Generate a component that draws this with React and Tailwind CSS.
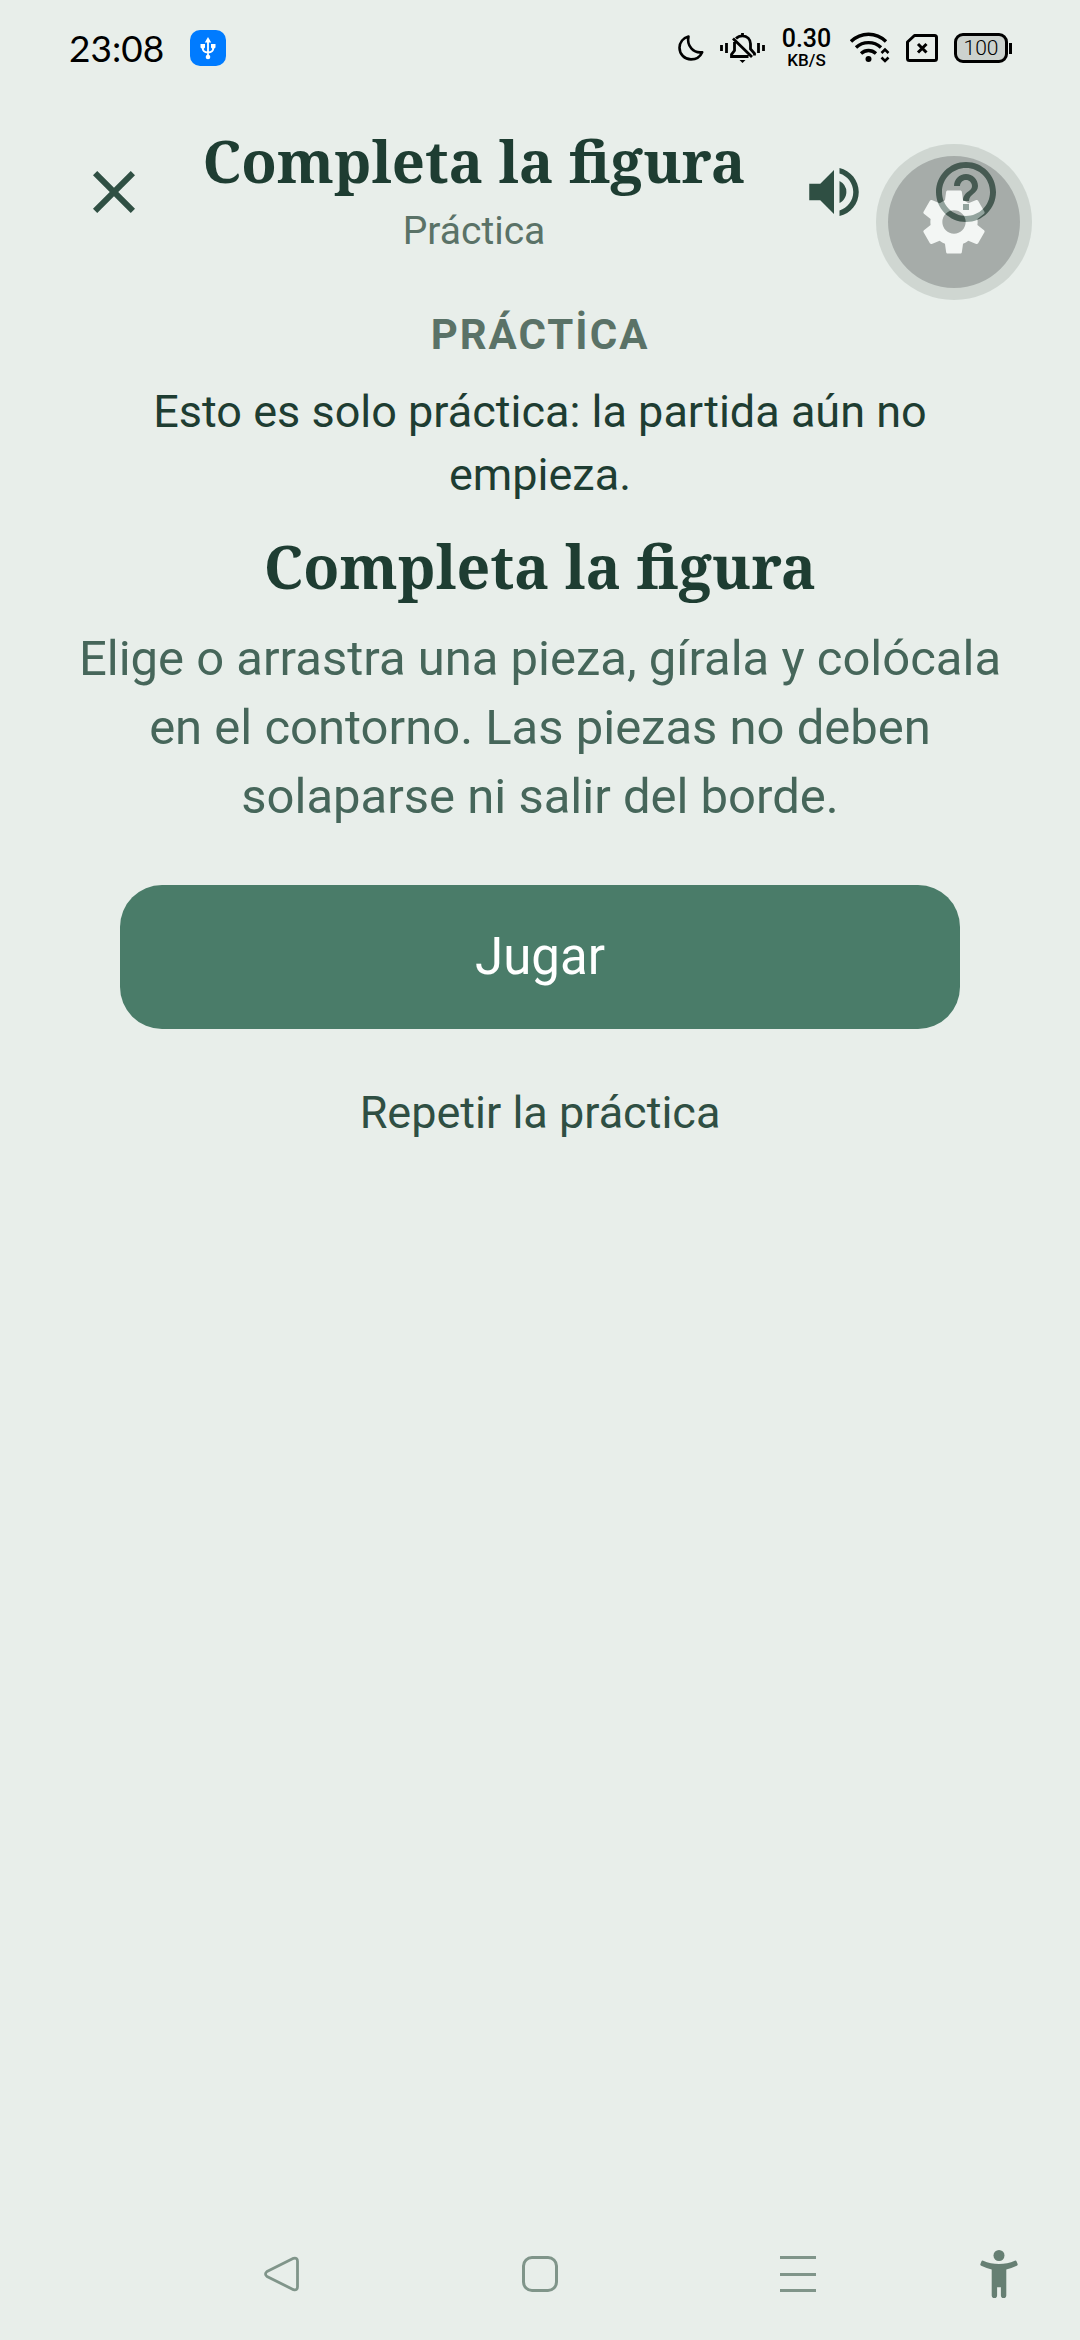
import { MdClose, MdVolumeUp, MdHelpOutline } from "react-icons/md";

function StatusBar() {
  return (
    <div className="flex h-24 items-center justify-between pl-[69px] pr-[68px] text-black">
      <div className="flex items-center gap-[26px]">
        <span className="pb-[2px] font-['Lato',sans-serif] text-[37px] leading-none">23:08</span>
        <span className="flex size-9 items-center justify-center rounded-[10px] bg-[#007bff]">
          <svg viewBox="0 0 36 36" className="size-9 fill-white">
            <path d="M18 7l3.200 5.500h-6.400z" />
            <path d="M10.500 14h4.500v3.500l-2 2-2.500-2zM21 14h4.500v3.500l-2.500 2-2-2z" />
            <path d="M18 11v15M12.500 17c0 4 2 5.500 5.500 5.500s5.500-1.500 5.500-5.500" fill="none" stroke="white" strokeWidth="1.800" />
            <circle cx="18" cy="27" r="2.300" />
          </svg>
        </span>
      </div>

      <div className="flex items-center">
        <svg viewBox="0 0 26 26" className="size-[26px]" fill="none" stroke="currentColor" strokeWidth="2.600" strokeLinejoin="round">
          <path d="M10.500 1.500C5 3 1.500 7.500 1.500 12.800c0 6.500 5.200 11.600 11.500 11.600 4.800 0 9.200-2.700 11.200-7.200C15.500 18.500 8.500 11 10.500 1.500z" />
        </svg>
        <svg viewBox="0 0 45 30" className="ml-4 h-[30px] w-[45px]" fill="none" stroke="currentColor" strokeWidth="2.800">
          <path d="M1.500 12v6M6.500 10v10M38.500 10v10M43.500 12v6" />
          <path d="M22.500 0v3M16 5.500c1.800-1.800 4-2.700 6.500-2.700 4.700 0 8 3.500 8 8v5.200l4 4.500v2M14.500 9v8.500l-3 4v2h17M13 5.500l19 18.500" />
          <path d="M19.500 27h6l-3 3z" fill="currentColor" stroke="none" />
        </svg>
        <div className="ml-4 flex w-[51px] flex-col items-center pb-[2px] font-medium">
          <span className="text-[25px] leading-[25px]">0.30</span>
          <span className="text-[17px] leading-[18px]">KB/S</span>
        </div>
        <svg viewBox="0 0 40 32" className="ml-[18px] h-8 w-10" fill="none" stroke="currentColor" strokeWidth="3.400">
          <path d="M1 9.500C11-.200 26-.200 36 9.500M6 15.500c7-6.500 18-6.500 25 0M11 21.500c4.500-4 10.500-4 15 0" />
          <circle cx="18.500" cy="27" r="3" fill="currentColor" stroke="none" />
          <path d="M31.500 21l3.500-3.500 3.500 3.500M31.500 25.500L35 29l3.500-3.500" strokeWidth="2.600" />
        </svg>
        <svg viewBox="0 0 32 28" className="ml-4 h-7 w-8" fill="none" stroke="currentColor" strokeWidth="3">
          <path d="M8.500 1.500H28.500a2 2 0 0 1 2 2v21a2 2 0 0 1-2 2h-25a2 2 0 0 1-2-2V8z" strokeLinejoin="round" />
          <path d="M12 10l8.500 8.500M20.500 10L12 18.500" />
        </svg>
        <div className="ml-4 flex items-center gap-px">
          <span className="flex h-[30px] w-[54px] items-center justify-center rounded-[9px] border-3 border-black bg-[#ccd2ce] text-[21px] font-light leading-none">
            100
          </span>
          <span className="h-[11px] w-[3px] bg-black"></span>
        </div>
      </div>
    </div>
  );
}

function Header() {
  return (
    <header className="flex h-48 items-center px-12 text-[#2f4f43]">
      <button aria-label="Cerrar" className="flex size-[132px] items-center justify-center">
        <MdClose className="size-[72px]" />
      </button>
      <div className="flex flex-1 flex-col items-center text-center">
        <h1 className="mb-1 font-['Noto_Serif','DejaVu_Serif',serif] text-[58px] font-bold leading-[78px] text-[#1e3d32]">
          Completa la figura
        </h1>
        <p className="pb-1 text-[39px] leading-[54px] text-[#5a7267]">Práctica</p>
      </div>
      <button aria-label="Sonido" className="flex size-[132px] items-center justify-center">
        <MdVolumeUp className="size-[66px]" />
      </button>
      <button aria-label="Ayuda" className="flex size-[132px] items-center justify-center">
        <MdHelpOutline className="size-[72px]" />
      </button>
    </header>
  );
}

// Translucent round button that floats above the header
function FloatingSettings() {
  return (
    <button aria-label="Ajustes" className="absolute right-12 top-36 size-[156px] rounded-full opacity-48">
      <svg viewBox="0 0 156 156" className="size-full">
        <circle cx="78" cy="78" r="78" fill="#b4beb8" />
        <circle cx="78" cy="78" r="66" fill="#606664" />
        <path
          transform="translate(78 78) scale(3.150) translate(-12 -12)"
          fill="white"
          d="M19.430 12.980c.04-.32.07-.64.07-.98s-.03-.66-.07-.98l2.110-1.650c.19-.15.24-.42.12-.64l-2-3.460c-.12-.22-.39-.3-.61-.22l-2.490 1c-.52-.4-1.080-.73-1.690-.98l-.38-2.650C14.460 2.180 14.250 2 14 2h-4c-.25 0-.46.18-.49.42l-.38 2.650c-.61.25-1.170.59-1.690.98l-2.490-1c-.23-.09-.49 0-.61.22l-2 3.460c-.13.22-.07.49.12.64l2.110 1.650c-.04.32-.07.65-.07.98s.03.66.07.98l-2.110 1.650c-.19.15-.24.42-.12.64l2 3.460c.12.22.39.3.61.22l2.490-1c.52.4 1.080.73 1.690.98l.38 2.650c.03.24.24.42.49.42h4c.25 0 .46-.18.49-.42l.38-2.650c.61-.25 1.170-.59 1.690-.98l2.490 1c.23.09.49 0 .61-.22l2-3.460c.12-.22.07-.49-.12-.64l-2.110-1.650zM12 15.700a3.700 3.700 0 1 1 0-7.400 3.700 3.700 0 0 1 0 7.400z"
        />
      </svg>
    </button>
  );
}

function NavBar() {
  return (
    <nav className="grid h-[132px] grid-cols-[153px_1fr_1fr_1fr_153px] items-center justify-items-center text-[#80958a]">
      <span></span>
      <button aria-label="Atrás">
        <svg viewBox="0 0 36 36" className="size-9" fill="none" stroke="currentColor" strokeWidth="2.800" strokeLinejoin="round">
          <path d="M29.500 2.300L3 15.500q-3 2.500 0 5L29.500 33.700q4 1 4-3V5.300q0-4-4-3z" />
        </svg>
      </button>
      <button aria-label="Inicio" className="size-9 rounded-[10px] border-3 border-[#80958a]"></button>
      <button aria-label="Recientes" className="flex h-9 w-9 flex-col justify-between">
        <span className="h-[3px] w-full bg-[#80958a]"></span>
        <span className="h-[3px] w-full bg-[#80958a]"></span>
        <span className="h-[3px] w-full bg-[#80958a]"></span>
      </button>
      <button aria-label="Accesibilidad" className="pr-[10px]">
        <svg viewBox="0 0 38 48" className="h-12 w-[38px] text-[#667f73]" fill="currentColor">
          <circle cx="19" cy="5.500" r="5.500" />
          <path
            d="M3.200 10.700C13 15 25 15 34.800 10.700q1.300-.4 1.800.8l1 2.500q.4 1.300-.8 1.800Q31.500 18.300 26.300 19.500V45.500a2.700 2.700 0 0 1-5.400 0V37.200h-3.800v8.300a2.700 2.700 0 0 1-5.400 0V19.500Q6.500 18.300 1.200 15.800q-1.200-.5-.8-1.800l1-2.500q.5-1.200 1.800-.8z"
          />
        </svg>
      </button>
    </nav>
  );
}

export default function App() {
  return (
    <div className="relative flex min-h-screen flex-col bg-[#e8eeea] font-['Roboto',sans-serif]">
      <StatusBar />
      <Header />
      <FloatingSettings />

      <main className="flex flex-1 flex-col items-center px-[72px] pt-4 text-center">
        <p className="text-[42px] font-bold leading-[62px] tracking-[2px] text-[#5a7267]">PRÁCTİCA</p>
        <p className="mt-[14px] px-12 text-[45px] leading-[63px] text-[#1e3d32]">
          Esto es solo práctica: la partida aún no empieza.
        </p>
        <h2 className="mt-[18px] font-['Noto_Serif','DejaVu_Serif',serif] text-[59px] font-bold leading-[84px] text-[#1e3d32]">
          Completa la figura
        </h2>
        <p className="mt-4 text-[49px] leading-[69px] text-[#46665a]">
          Elige o arrastra una pieza, gírala y colócala en el contorno. Las piezas no deben solaparse ni salir del borde.
        </p>
        <button className="mt-[54px] h-36 w-[840px] max-w-full rounded-[42px] bg-[#4a7c69] text-[51px] text-white">Jugar</button>
        <button className="mt-12 text-[45px] leading-[72px] text-[#2f4f43]">Repetir la práctica</button>
      </main>

      <NavBar />
    </div>
  );
}
